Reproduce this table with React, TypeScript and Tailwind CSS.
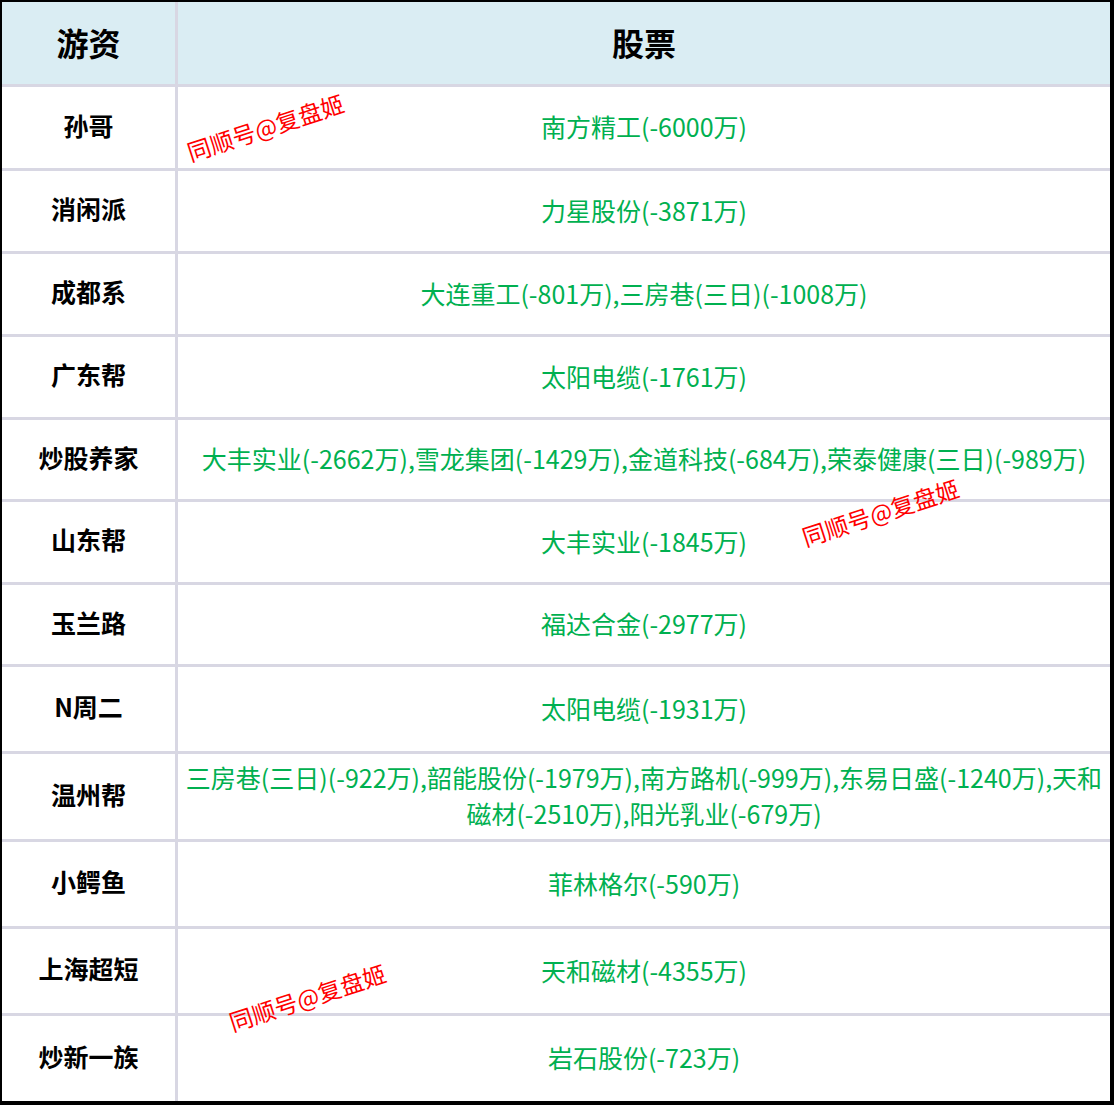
const rows: { name: string; h: string; stocks: React.ReactNode }[] = [
  { name: "孙哥", h: "h-[84px]", stocks: "南方精工(-6000万)" },
  { name: "消闲派", h: "h-[83px]", stocks: "力星股份(-3871万)" },
  { name: "成都系", h: "h-[83px]", stocks: "大连重工(-801万),三房巷(三日)(-1008万)" },
  { name: "广东帮", h: "h-[83px]", stocks: "太阳电缆(-1761万)" },
  {
    name: "炒股养家",
    h: "h-[82px]",
    stocks: "大丰实业(-2662万),雪龙集团(-1429万),金道科技(-684万),荣泰健康(三日)(-989万)",
  },
  { name: "山东帮", h: "h-[83px]", stocks: "大丰实业(-1845万)" },
  { name: "玉兰路", h: "h-[82px]", stocks: "福达合金(-2977万)" },
  { name: "N周二", h: "h-[87px]", stocks: "太阳电缆(-1931万)" },
  {
    name: "温州帮",
    h: "h-[88px]",
    stocks: (
      <>
        三房巷(三日)(-922万),韶能股份(-1979万),南方路机(-999万),东易日盛(-1240万),天和
        <br />
        磁材(-2510万),阳光乳业(-679万)
      </>
    ),
  },
  { name: "小鳄鱼", h: "h-[87px]", stocks: "菲林格尔(-590万)" },
  { name: "上海超短", h: "h-[87px]", stocks: "天和磁材(-4355万)" },
  { name: "炒新一族", h: "h-[85px]", stocks: "岩石股份(-723万)" },
];

const Watermark = ({ className }: { className: string }) => (
  <div
    className={`absolute ${className} -rotate-[18deg] text-[23.5px] leading-none whitespace-nowrap text-[#ff0000] pointer-events-none`}
  >
    同顺号@复盘姬
  </div>
);

export default function App() {
  return (
    <div
      className="relative w-[1114px] h-[1105px] bg-white border-black border-t-2 border-l-2 border-r-4 border-b-4 overflow-hidden"
      style={{ fontFamily: '"Microsoft YaHei", "Noto Sans CJK SC", sans-serif' }}
    >
      <div className="flex h-[85px] bg-[#daedf3] border-b-[3px] border-[#d8d7e3]">
        <div className="w-[176px] shrink-0 border-r-[3px] border-[#d8d7e3] flex items-center justify-center pb-[3px] text-[32px] font-bold text-black">
          游资
        </div>
        <div className="flex-1 flex items-center justify-center pb-[3px] text-[32px] font-bold text-black">
          股票
        </div>
      </div>
      {rows.map((r, i) => (
        <div
          key={r.name}
          className={`flex ${r.h} ${i < rows.length - 1 ? "border-b-[3px]" : ""} border-[#d8d7e3]`}
        >
          <div className="w-[176px] shrink-0 border-r-[3px] border-[#d8d7e3] flex items-center justify-center pb-[4px] text-[25px] font-bold text-black">
            {r.name}
          </div>
          <div className="flex-1 flex items-center justify-center text-center px-1 pb-[3px] text-[25px] leading-[36px] text-[#00b050]">
            <div>{r.stocks}</div>
          </div>
        </div>
      ))}
      <Watermark className="left-[182px] top-[114px]" />
      <Watermark className="left-[797px] top-[499px]" />
      <Watermark className="left-[224px] top-[984px]" />
    </div>
  );
}
